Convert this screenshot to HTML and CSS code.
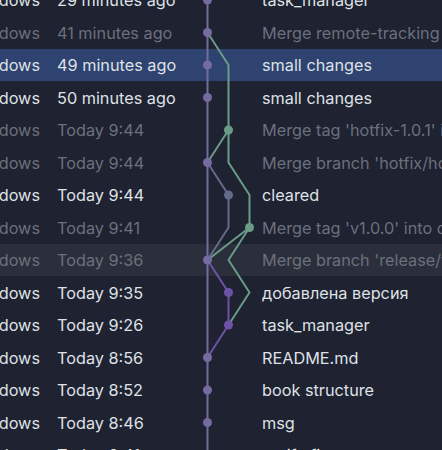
FILE: index.html
```html
<!DOCTYPE html>
<html>
<head>
<meta charset="utf-8">
<link rel="stylesheet" href="styles.css">
</head>
<body>
<div class="log">
  <div class="row"><div class="author"><span>Windows</span></div><div class="date">29 minutes ago</div><div class="msg">task_manager</div></div>
  <div class="row dim"><div class="author"><span>Windows</span></div><div class="date">41 minutes ago</div><div class="msg">Merge remote-tracking branch 'origin/main'</div></div>
  <div class="row selected"><div class="author"><span>Windows</span></div><div class="date">49 minutes ago</div><div class="msg">small changes</div></div>
  <div class="row"><div class="author"><span>Windows</span></div><div class="date">50 minutes ago</div><div class="msg">small changes</div></div>
  <div class="row dim"><div class="author"><span>Windows</span></div><div class="date">Today 9:44</div><div class="msg">Merge tag 'hotfix-1.0.1' into develop</div></div>
  <div class="row dim"><div class="author"><span>Windows</span></div><div class="date">Today 9:44</div><div class="msg">Merge branch 'hotfix/hotfix-1.0.1'</div></div>
  <div class="row"><div class="author"><span>Windows</span></div><div class="date">Today 9:44</div><div class="msg">cleared</div></div>
  <div class="row dim"><div class="author"><span>Windows</span></div><div class="date">Today 9:41</div><div class="msg">Merge tag 'v1.0.0' into develop</div></div>
  <div class="row dim hover"><div class="author"><span>Windows</span></div><div class="date">Today 9:36</div><div class="msg">Merge branch 'release/v1.0.0'</div></div>
  <div class="row"><div class="author"><span>Windows</span></div><div class="date">Today 9:35</div><div class="msg">добавлена версия</div></div>
  <div class="row"><div class="author"><span>Windows</span></div><div class="date">Today 9:26</div><div class="msg">task_manager</div></div>
  <div class="row"><div class="author"><span>Windows</span></div><div class="date">Today 8:56</div><div class="msg">README.md</div></div>
  <div class="row"><div class="author"><span>Windows</span></div><div class="date">Today 8:52</div><div class="msg">book structure</div></div>
  <div class="row"><div class="author"><span>Windows</span></div><div class="date">Today 8:46</div><div class="msg">msg</div></div>
  <div class="row"><div class="author"><span>Windows</span></div><div class="date">Today 8:41</div><div class="msg">notify fix</div></div>
</div>
<svg class="graph" width="442" height="450" viewBox="0 0 442 450">
  <line x1="207.5" y1="-20" x2="207.5" y2="460" class="l-main"/>
  <polyline points="207.5,32.5 228.5,65 228.5,130 207.5,162.5" class="l-green"/>
  <polyline points="228.5,130 228.5,162.5 249.5,195 249.5,227.5 207.5,260" class="l-green"/>
  <polyline points="249.5,227.5 228.5,260 249.5,292.5 228.5,325" class="l-green"/>
  <polyline points="207.5,162.5 228.5,195 228.5,227.5 207.5,260" class="l-gray"/>
  <polyline points="207.5,260 228.5,292.5 228.5,325 207.5,357.5" class="l-violet"/>
  <circle cx="207.5" cy="0" r="4.5" class="d-main"/>
  <circle cx="207.5" cy="32.5" r="4.5" class="d-main"/>
  <circle cx="207.5" cy="65" r="4.5" class="d-main"/>
  <circle cx="207.5" cy="97.5" r="4.5" class="d-main"/>
  <circle cx="228.5" cy="130" r="4.5" class="d-green"/>
  <circle cx="207.5" cy="162.5" r="4.5" class="d-main"/>
  <circle cx="228.5" cy="195" r="4.5" class="d-gray"/>
  <circle cx="249.5" cy="227.5" r="4.5" class="d-green"/>
  <circle cx="207.5" cy="260" r="4.5" class="d-main"/>
  <circle cx="228.5" cy="292.5" r="4.5" class="d-violet"/>
  <circle cx="228.5" cy="325" r="4.5" class="d-violet"/>
  <circle cx="207.5" cy="357.5" r="4.5" class="d-main"/>
  <circle cx="207.5" cy="390" r="4.5" class="d-main"/>
  <circle cx="207.5" cy="422.5" r="4.5" class="d-main"/>
</svg>
</body>
</html>
```

FILE: styles.css
```css
html, body {
  margin: 0;
  padding: 0;
  background: #1e2231;
  overflow: hidden;
  width: 442px;
  height: 450px;
}

body {
  position: relative;
  font-family: Inter, "Noto Sans", sans-serif;
  font-size: 16.25px;
  color: #dfe1e5;
}

.log {
  margin-top: -16.25px;
  display: flex;
  flex-direction: column;
}

.row {
  height: 32.5px;
  display: grid;
  grid-template-columns: 40px 222px 1fr;
  align-items: center;
  white-space: nowrap;
}

.row.dim {
  color: #6c707c;
}

.row.selected {
  background: #2e4370;
}

.row.hover {
  background: #2b2f3b;
}

.author {
  display: flex;
  justify-content: flex-end;
  overflow: hidden;
}

.date {
  padding-left: 17px;
  overflow: hidden;
}

.msg {
  overflow: hidden;
}

.graph {
  position: absolute;
  left: 0;
  top: 0;
}

.graph line, .graph polyline {
  fill: none;
  stroke-width: 2;
  stroke-linejoin: round;
}

.l-main { stroke: #766ba0; }
.l-green { stroke: #6b9b87; }
.l-gray { stroke: #646a8c; }
.l-violet { stroke: #6d52a8; }

.d-main { fill: #766ba0; }
.d-green { fill: #6b9b87; }
.d-gray { fill: #646a8c; }
.d-violet { fill: #6d52a8; }
```
